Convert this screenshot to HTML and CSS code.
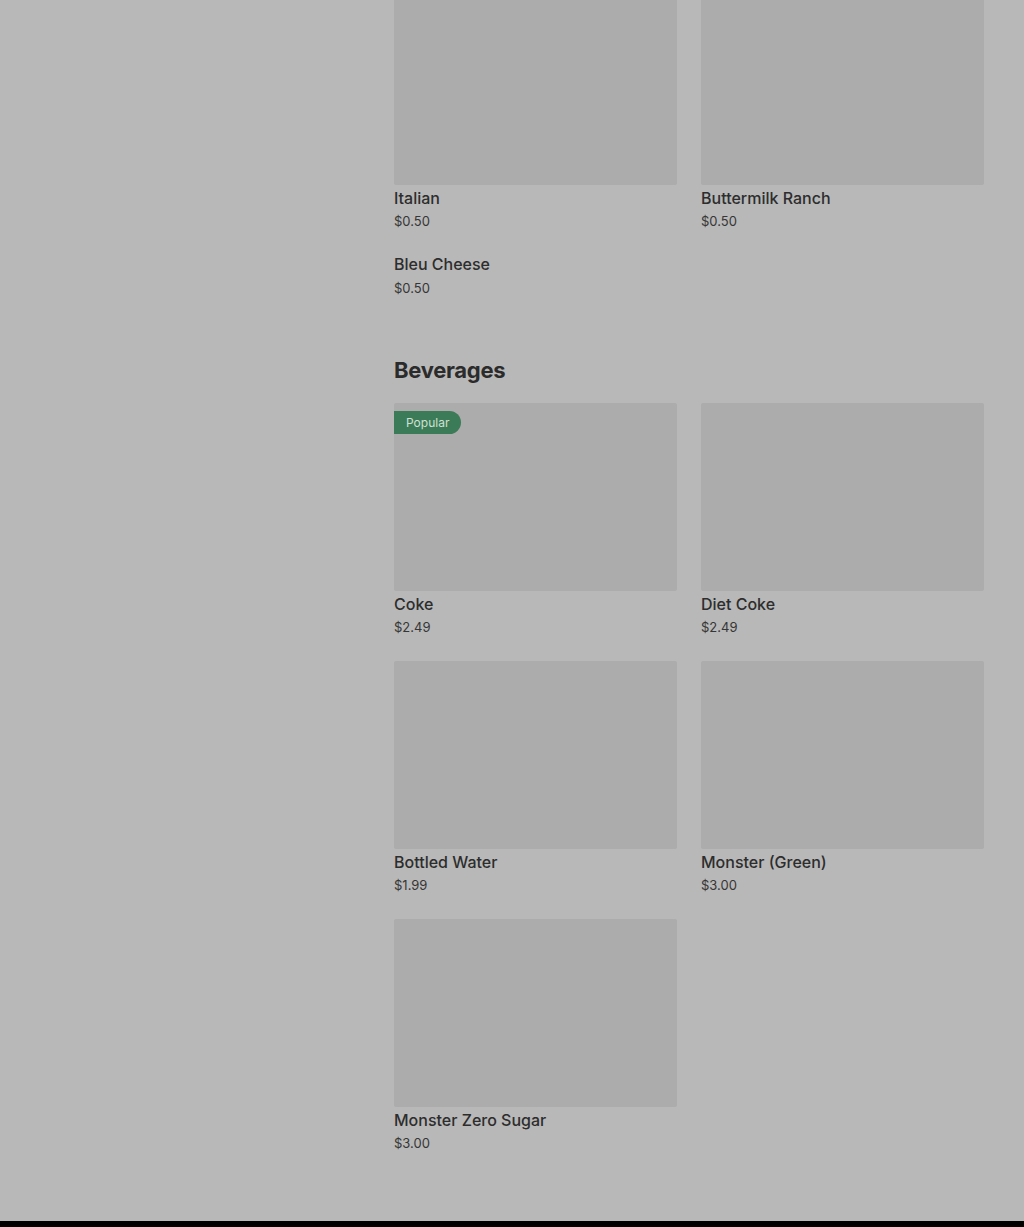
FILE: index.html
```html
<!DOCTYPE html>
<html lang="en">
<head>
  <meta charset="UTF-8">
  <title>Menu</title>
  <link rel="stylesheet" href="styles.css">
</head>
<body>
  <div class="page">
    <div class="sidebar"></div>
    <div class="menu">

      <!-- Dressings (scrolled, top cut off) -->
      <section class="section first">
        <div class="grid">
          <div class="item">
            <div class="photo"></div>
            <div class="name">Italian</div>
            <div class="price">$0.50</div>
          </div>
          <div class="item">
            <div class="photo"></div>
            <div class="name">Buttermilk Ranch</div>
            <div class="price">$0.50</div>
          </div>
          <div class="item no-photo">
            <div class="name">Bleu Cheese</div>
            <div class="price">$0.50</div>
          </div>
        </div>
      </section>

      <section class="section">
        <h2>Beverages</h2>
        <div class="grid">
          <div class="item">
            <div class="photo">
              <span class="badge">Popular</span>
            </div>
            <div class="name">Coke</div>
            <div class="price">$2.49</div>
          </div>
          <div class="item">
            <div class="photo"></div>
            <div class="name">Diet Coke</div>
            <div class="price">$2.49</div>
          </div>
          <div class="item">
            <div class="photo"></div>
            <div class="name">Bottled Water</div>
            <div class="price">$1.99</div>
          </div>
          <div class="item">
            <div class="photo"></div>
            <div class="name">Monster (Green)</div>
            <div class="price">$3.00</div>
          </div>
          <div class="item">
            <div class="photo"></div>
            <div class="name">Monster Zero Sugar</div>
            <div class="price">$3.00</div>
          </div>
        </div>
      </section>
    </div>
  </div>
  <div class="footer"></div>
</body>
</html>
```

FILE: styles.css
```css
html, body {
  margin: 0;
  padding: 0;
}
body {
  font-family: 'Inter', 'Liberation Sans', sans-serif;
  background: #b8b8b8;
  color: #2d2d2d;
  height: 1227px;
  overflow: hidden;
  display: flex;
  flex-direction: column;
}
.page {
  display: flex;
  flex: 1;
}
.sidebar {
  width: 394px;
  flex-shrink: 0;
}
.menu {
  width: 590px;
}
.section.first {
  margin-top: -3px;
}
.section + .section {
  margin-top: 55px;
}
h2 {
  margin: 0 0 17px;
  font-size: 22px;
  line-height: 32px;
  font-weight: 700;
  letter-spacing: -0.3px;
  color: #2b2b2b;
}
.grid {
  display: grid;
  grid-template-columns: 283px 283px;
  column-gap: 24px;
  row-gap: 23px;
}
.photo {
  position: relative;
  height: 188px;
  background: #acacac;
  border-radius: 2px;
}
.badge {
  position: absolute;
  top: 8px;
  left: 0;
  height: 23px;
  line-height: 23px;
  padding: 0 12px;
  font-size: 12px;
  color: #cfe0d4;
  background: #3b7b57;
  border-radius: 0 12px 12px 0;
}
.name {
  margin-top: 2px;
  font-size: 16px;
  line-height: 22px;
  font-weight: 500;
  color: #2d2d2d;
}
.no-photo .name {
  margin-top: -2px;
}
.price {
  margin-top: 1px;
  font-size: 13px;
  line-height: 22px;
  color: #363636;
}
.no-photo .price {
  margin-top: 2px;
}
.footer {
  height: 6px;
  background: #000;
}
```
